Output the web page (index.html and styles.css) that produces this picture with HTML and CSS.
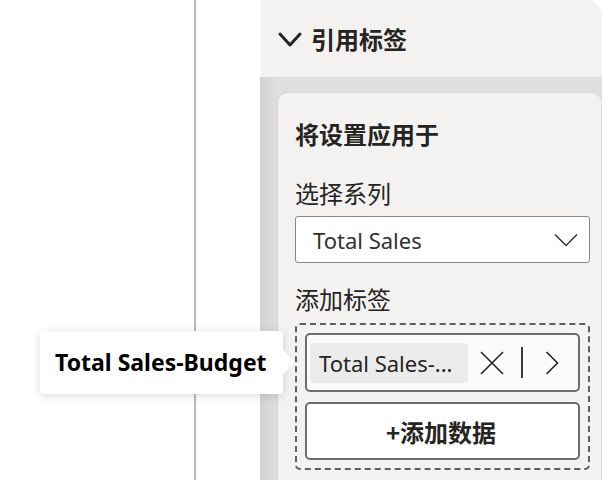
FILE: index.html
```html
<!DOCTYPE html>
<html lang="zh-CN">
<head>
<meta charset="utf-8">
<title>引用标签</title>
<link rel="stylesheet" href="styles.css">
</head>
<body>
<div class="page">
  <div class="canvas"></div>
  <div class="divider"></div>
  <div class="gap"></div>
  <div class="pane">
    <div class="pane-head">
      <svg class="head-chevron" width="24" height="16" viewBox="0 0 24 16"><path d="M2 2 L12 13 L22 2" fill="none" stroke="#252423" stroke-width="3" stroke-linecap="round" stroke-linejoin="round"/></svg>
      <span class="head-title">引用标签</span>
    </div>
    <div class="pane-body">
      <div class="card">
        <div class="card-title">将设置应用于</div>
        <div class="field-label">选择系列</div>
        <div class="select">
          <span class="select-text">Total Sales</span>
          <svg class="select-chevron" width="24" height="14" viewBox="0 0 24 14"><path d="M1 1.5 L12 12.5 L23 1.5" fill="none" stroke="#323130" stroke-width="1.5"/></svg>
        </div>
        <div class="field-label field-label-2">添加标签</div>
        <div class="dropzone">
          <div class="tag-row">
            <span class="chip">Total Sales-...</span>
            <svg class="icon-x" width="24" height="24" viewBox="0 0 24 24"><path d="M1 1 L23 23 M23 1 L1 23" fill="none" stroke="#252423" stroke-width="1.6"/></svg>
            <span class="sep"></span>
            <svg class="icon-next" width="14" height="24" viewBox="0 0 14 24"><path d="M1.5 1 L12.5 12 L1.5 23" fill="none" stroke="#252423" stroke-width="1.6"/></svg>
          </div>
          <div class="add-btn">+添加数据</div>
        </div>
      </div>
    </div>
  </div>
  <div class="tooltip">Total Sales-Budget</div>
</div>
</body>
</html>
```

FILE: styles.css
```css
html, body {
  margin: 0;
  padding: 0;
  background: #ffffff;
}
body {
  font-family: "Noto Sans", "Noto Sans CJK SC", sans-serif;
  color: #252423;
}
.page {
  position: relative;
  display: flex;
  width: 602px;
  height: 480px;
  overflow: hidden;
}
.canvas {
  width: 194px;
  flex: none;
  background: #ffffff;
}
.divider {
  width: 2px;
  flex: none;
  background: #bdb8b6;
}
.gap {
  width: 64px;
  flex: none;
  background: #ffffff;
}
.pane {
  flex: 1;
  display: flex;
  flex-direction: column;
  background: #e1dfdd;
  border-top-right-radius: 16px;
}
.pane-head {
  height: 77px;
  flex: none;
  display: flex;
  align-items: center;
  padding-left: 17px;
  gap: 9px;
  background: #f3f2f1;
  border-left: 1px solid #f8f7f6;
  border-top-right-radius: 16px;
  box-sizing: border-box;
}
.head-chevron {
  display: block;
  margin-top: 2px;
}
.head-title {
  font-family: "Noto Sans CJK SC", sans-serif;
  font-size: 24px;
  font-weight: 700;
  line-height: 32px;
}
.pane-body {
  flex: 1;
  padding: 16px 1px 0 18px;
  background: linear-gradient(to right, #d4d2d0, #e1dfdd 17px);
}
.card {
  height: 100%;
  background: #f3f2f1;
  border-top-left-radius: 9px;
  border-top-right-radius: 9px;
  padding: 25px 11px 0 17px;
  box-sizing: border-box;
  box-shadow: -1px 0 3px rgba(0, 0, 0, 0.06);
}
.card-title {
  font-family: "Noto Sans CJK SC", sans-serif;
  font-size: 24px;
  font-weight: 700;
  line-height: 32px;
}
.field-label {
  font-family: "Noto Sans CJK SC", sans-serif;
  font-size: 24px;
  line-height: 32px;
  margin-top: 27px;
}
.field-label-2 {
  margin-top: 20px;
}
.select {
  margin-top: 7px;
  height: 47px;
  box-sizing: border-box;
  border: 1.5px solid #8a8886;
  border-radius: 3px;
  background: #ffffff;
  display: flex;
  align-items: center;
  justify-content: space-between;
  padding: 0 11px 0 17px;
}
.select-text {
  font-size: 22px;
  color: #323130;
}
.select-chevron {
  display: block;
}
.dropzone {
  margin-top: 8px;
  height: 147px;
  box-sizing: border-box;
  border: 2px dashed #605e5c;
  border-radius: 5px;
  padding: 8px;
  display: flex;
  flex-direction: column;
  gap: 10px;
}
.tag-row {
  height: 59px;
  box-sizing: border-box;
  border: 2px solid #6e6d6c;
  border-radius: 5px;
  background: #fafafa;
  display: flex;
  align-items: center;
  padding: 0 0 0 3px;
}
.chip {
  width: 158px;
  height: 40px;
  box-sizing: border-box;
  background: #ebebeb;
  border-radius: 4px;
  padding-left: 9px;
  font-size: 22px;
  line-height: 40px;
  white-space: nowrap;
  overflow: hidden;
  color: #252423;
}
.icon-x {
  display: block;
  margin-left: 12px;
}
.sep {
  width: 2px;
  height: 31px;
  background: #3b3a39;
  margin-left: 17px;
}
.icon-next {
  display: block;
  margin-left: 22px;
}
.add-btn {
  height: 58px;
  box-sizing: border-box;
  border: 2px solid #6e6d6c;
  border-radius: 5px;
  background: #ffffff;
  display: flex;
  align-items: center;
  justify-content: center;
  font-family: "Noto Sans CJK SC", sans-serif;
  font-size: 24px;
  font-weight: 700;
  padding-right: 3px;
}
.tooltip {
  position: absolute;
  left: 40px;
  top: 331px;
  width: 243px;
  height: 63px;
  box-sizing: border-box;
  background: #ffffff;
  border-radius: 4px;
  box-shadow: 0 2px 10px rgba(0, 0, 0, 0.14);
  font-size: 23px;
  font-weight: 700;
  color: #000000;
  line-height: 63px;
  padding-left: 15px;
  white-space: nowrap;
}
.tooltip::after {
  content: "";
  position: absolute;
  left: 242px;
  top: 18px;
  width: 0;
  height: 0;
  border-top: 13px solid transparent;
  border-bottom: 13px solid transparent;
  border-left: 13px solid #ffffff;
}
```
